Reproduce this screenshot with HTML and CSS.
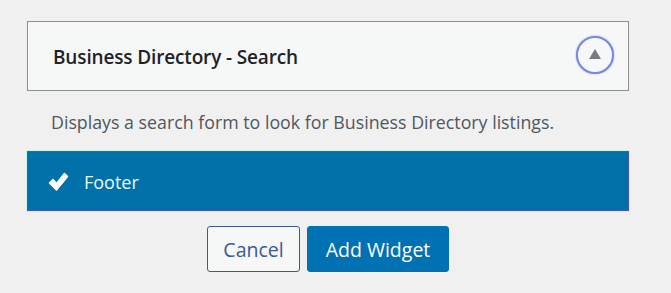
FILE: index.html
```html
<!DOCTYPE html>
<html lang="en">
<head>
    <meta charset="UTF-8">
    <title>Add Widget</title>
    <link rel="stylesheet" href="styles.css">
</head>
<body>
    <div class="chooser">
        <div class="widget-top">
            <h3 class="widget-title">Business Directory - Search</h3>
            <button class="toggle" aria-label="Collapse">
                <svg width="12" height="10" viewBox="0 0 12 10"><path d="M6 0 L12 10 L0 10 Z" fill="#787c82"/></svg>
            </button>
        </div>
        <p class="widget-desc">Displays a search form to look for Business Directory listings.</p>
        <ul class="sidebars">
            <li class="sidebar selected">
                <svg class="check" width="21" height="20" viewBox="0 0 21 20"><path d="M1.5 11 L5 7.5 L8.5 11.5 L16.5 1.5 L19.5 4.5 L8.5 18 Z" fill="#fff" stroke="#fff" stroke-width="1.5" stroke-linejoin="round"/></svg>
                <span>Footer</span>
            </li>
        </ul>
        <div class="actions">
            <button class="btn btn-secondary">Cancel</button>
            <button class="btn btn-primary">Add Widget</button>
        </div>
    </div>
</body>
</html>
```

FILE: styles.css
```css
body {
    margin: 0;
    background: #f0f0f1;
    font-family: "Open Sans", "Noto Sans", sans-serif;
    color: #1d2327;
}

.chooser {
    width: 602px;
    padding: 21px 0 0 27px;
}

.widget-top {
    display: flex;
    align-items: center;
    justify-content: space-between;
    height: 68px;
    background: #f6f7f7;
    border: 1px solid #8c8f94;
    padding: 0 14px 0 25px;
}

.widget-title {
    margin: 2px 0 0;
    font-size: 19px;
    font-weight: 600;
    letter-spacing: -0.15px;
}

.toggle {
    width: 38px;
    height: 38px;
    border-radius: 50%;
    border: 2px solid #7b86dd;
    background: #f6f7f7;
    box-shadow: 0 0 2px rgba(90, 110, 220, 0.6);
    display: flex;
    align-items: center;
    justify-content: center;
    padding: 0 0 2px;
    margin-top: -2px;
}

.widget-desc {
    margin: 19px 0 0 24px;
    font-size: 17.8px;
    line-height: 24px;
    color: #50575e;
}

.sidebars {
    list-style: none;
    margin: 17px 0 0;
    padding: 0;
}

.sidebar {
    display: flex;
    align-items: center;
    height: 56px;
    border: 1px solid #4a5aa8;
    outline: 1px solid #c8f2e8;
    padding: 2px 0 0 20px;
    font-size: 18px;
    box-sizing: content-box;
}

.sidebar.selected {
    background: #0071a8;
    color: #e6fbff;
}

.check {
    margin-right: 15px;
}

.actions {
    display: flex;
    justify-content: center;
    gap: 7px;
    margin-top: 15px;
}

.btn {
    height: 46px;
    border-radius: 3px;
    font-family: inherit;
    font-size: 19.5px;
    padding: 0;
    cursor: pointer;
}

.btn-secondary {
    width: 93px;
    background: #f6f7f7;
    color: #3a5a95;
    border: 1px solid #3a5a95;
}

.btn-primary {
    width: 142px;
    background: #0071b3;
    color: #fff;
    border: 1px solid #0071b3;
}
```
